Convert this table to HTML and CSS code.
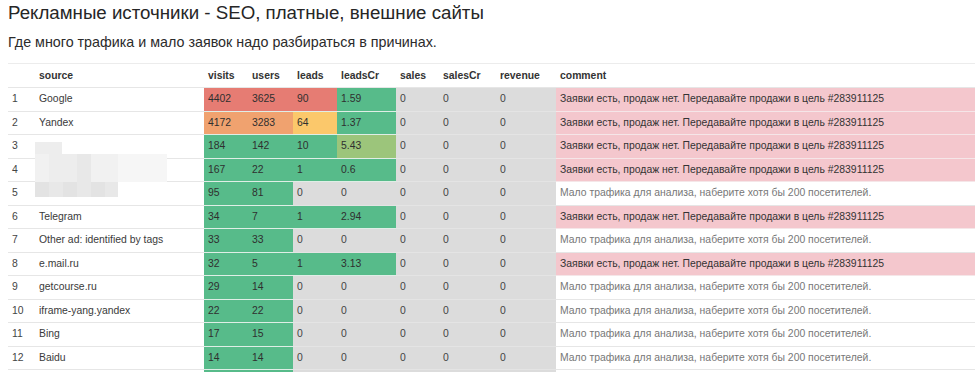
FILE: index.html
```html
<!DOCTYPE html>
<html lang="ru">
<head>
<meta charset="utf-8">
<link rel="stylesheet" href="styles.css">
</head>
<body>
<h1 class="title">Рекламные источники - SEO, платные, внешние сайты</h1>
<p class="subtitle">Где много трафика и мало заявок надо разбираться в причинах.</p>
<div class="table-wrap">
<table class="report">
<colgroup>
<col class="c-idx"><col class="c-src"><col class="c-visits"><col class="c-users"><col class="c-leads"><col class="c-lcr"><col class="c-sales"><col class="c-scr"><col class="c-rev"><col class="c-com">
</colgroup>
<thead>
<tr><th></th><th>source</th><th>visits</th><th>users</th><th>leads</th><th>leadsCr</th><th>sales</th><th>salesCr</th><th>revenue</th><th>comment</th></tr>
</thead>
<tbody>
<tr><td class="idx">1</td><td>Google</td><td class="red">4402</td><td class="red">3625</td><td class="red">90</td><td class="green">1.59</td><td class="gray">0</td><td class="gray">0</td><td class="gray">0</td><td class="pink">Заявки есть, продаж нет. Передавайте продажи в цель #283911125</td></tr>
<tr><td class="idx">2</td><td>Yandex</td><td class="orange">4172</td><td class="orange">3283</td><td class="yellow">64</td><td class="green">1.37</td><td class="gray">0</td><td class="gray">0</td><td class="gray">0</td><td class="pink">Заявки есть, продаж нет. Передавайте продажи в цель #283911125</td></tr>
<tr><td class="idx">3</td><td></td><td class="green">184</td><td class="green">142</td><td class="green">10</td><td class="lime">5.43</td><td class="gray">0</td><td class="gray">0</td><td class="gray">0</td><td class="pink">Заявки есть, продаж нет. Передавайте продажи в цель #283911125</td></tr>
<tr><td class="idx">4</td><td></td><td class="green">167</td><td class="green">22</td><td class="green">1</td><td class="green">0.6</td><td class="gray">0</td><td class="gray">0</td><td class="gray">0</td><td class="pink">Заявки есть, продаж нет. Передавайте продажи в цель #283911125</td></tr>
<tr><td class="idx">5</td><td></td><td class="green">95</td><td class="green">81</td><td class="gray">0</td><td class="gray">0</td><td class="gray">0</td><td class="gray">0</td><td class="gray">0</td><td class="muted">Мало трафика для анализа, наберите хотя бы 200 посетителей.</td></tr>
<tr><td class="idx">6</td><td>Telegram</td><td class="green">34</td><td class="green">7</td><td class="green">1</td><td class="green">2.94</td><td class="gray">0</td><td class="gray">0</td><td class="gray">0</td><td class="pink">Заявки есть, продаж нет. Передавайте продажи в цель #283911125</td></tr>
<tr><td class="idx">7</td><td>Other ad: identified by tags</td><td class="green">33</td><td class="green">33</td><td class="gray">0</td><td class="gray">0</td><td class="gray">0</td><td class="gray">0</td><td class="gray">0</td><td class="muted">Мало трафика для анализа, наберите хотя бы 200 посетителей.</td></tr>
<tr><td class="idx">8</td><td>e.mail.ru</td><td class="green">32</td><td class="green">5</td><td class="green">1</td><td class="green">3.13</td><td class="gray">0</td><td class="gray">0</td><td class="gray">0</td><td class="pink">Заявки есть, продаж нет. Передавайте продажи в цель #283911125</td></tr>
<tr><td class="idx">9</td><td>getcourse.ru</td><td class="green">29</td><td class="green">14</td><td class="gray">0</td><td class="gray">0</td><td class="gray">0</td><td class="gray">0</td><td class="gray">0</td><td class="muted">Мало трафика для анализа, наберите хотя бы 200 посетителей.</td></tr>
<tr><td class="idx">10</td><td>iframe-yang.yandex</td><td class="green">22</td><td class="green">22</td><td class="gray">0</td><td class="gray">0</td><td class="gray">0</td><td class="gray">0</td><td class="gray">0</td><td class="muted">Мало трафика для анализа, наберите хотя бы 200 посетителей.</td></tr>
<tr><td class="idx">11</td><td>Bing</td><td class="green">17</td><td class="green">15</td><td class="gray">0</td><td class="gray">0</td><td class="gray">0</td><td class="gray">0</td><td class="gray">0</td><td class="muted">Мало трафика для анализа, наберите хотя бы 200 посетителей.</td></tr>
<tr><td class="idx">12</td><td>Baidu</td><td class="green">14</td><td class="green">14</td><td class="gray">0</td><td class="gray">0</td><td class="gray">0</td><td class="gray">0</td><td class="gray">0</td><td class="muted">Мало трафика для анализа, наберите хотя бы 200 посетителей.</td></tr>
<tr class="tail"><td></td><td></td><td class="green"></td><td class="green"></td><td class="gray"></td><td class="gray"></td><td class="gray"></td><td class="gray"></td><td class="gray"></td><td></td></tr>
</tbody>
</table>
<div class="mosaic">
  <div class="m-row m-r1"><span class="m a" style="width:27px"></span></div>
  <div class="m-row m-r2"><span class="m b" style="width:14px"></span><span class="m a" style="width:28px"></span><span class="m c" style="width:14px"></span><span class="m b" style="width:27px"></span><span class="m d" style="width:49px"></span></div>
  <div class="m-row m-r3"><span class="m e" style="width:14px"></span><span class="m f" style="width:14px"></span><span class="m e" style="width:14px"></span><span class="m f" style="width:14px"></span><span class="m e" style="width:14px"></span><span class="m c" style="width:13px"></span></div>
</div>
</div>
</body>
</html>
```

FILE: styles.css
```css
html, body {
  margin: 0;
  padding: 0;
  overflow: hidden;
  background: #fff;
}
body {
  padding: 0 5px 0 8px;
  font-family: "Liberation Sans", Arial, sans-serif;
  color: #333;
}
.title {
  margin: 0;
  padding-top: 3px;
  font-size: 18.7px;
  line-height: 20px;
  font-weight: normal;
  color: #262626;
}
.subtitle {
  margin: 0;
  padding-top: 11px;
  font-size: 14.3px;
  line-height: 16px;
  color: #2b2b2b;
}
.table-wrap {
  position: relative;
  margin-top: 13px;
}
.report {
  width: 967px;
  border-collapse: collapse;
  table-layout: fixed;
  font-size: 10.4px;
  border-top: 1px solid #ececec;
}
.c-idx { width: 27px; }
.c-src { width: 169px; }
.c-visits { width: 44px; }
.c-users { width: 45px; }
.c-leads { width: 44px; }
.c-lcr { width: 59px; }
.c-sales { width: 43px; }
.c-scr { width: 57px; }
.c-rev { width: 60px; }
.c-com { width: 419px; }
.report th {
  text-align: left;
  font-weight: bold;
  color: #333;
  padding: 4px;
  height: 15px;
  line-height: 15px;
  border-bottom: 1px solid #e6e6e6;
}
.report td {
  padding: 4px;
  height: 14.5px;
  line-height: 14.5px;
  white-space: nowrap;
  overflow: hidden;
  border-bottom: 1px solid #e6e6e6;
  color: #3a3a3a;
}
.report td.idx { color: #444; }
.red { background: #e67c73; }
.orange { background: #f0a26f; }
.yellow { background: #fbc86b; }
.green { background: #57bb8a; }
.lime { background: #9cc57b; }
.gray { background: #dcdcdc; }
.pink { background: #f4c7cd; }
.report td.red, .report td.orange, .report td.yellow, .report td.green, .report td.lime {
  border-bottom-color: #dfeee6;
  color: #2f2f2f;
}
.report td.gray {
  border-bottom-color: #e4e4e4;
  color: #444;
}
.report td.pink {
  border-bottom-color: #f5e6e8;
  color: #333;
}
.report td.muted { color: #777; }
.mosaic {
  position: absolute;
  left: 27px;
  top: 79px;
}
.m-row {
  display: flex;
}
.m-r1 { height: 12px; }
.m-r2 { height: 28px; }
.m-r3 { height: 15px; }
.m { display: block; height: 100%; }
.a { background: #ededed; }
.b { background: #f1f1f1; }
.c { background: #e8e8e8; }
.d { background: #f6f6f6; }
.e { background: #e3e3e3; }
.f { background: #e8e8e8; }
```
